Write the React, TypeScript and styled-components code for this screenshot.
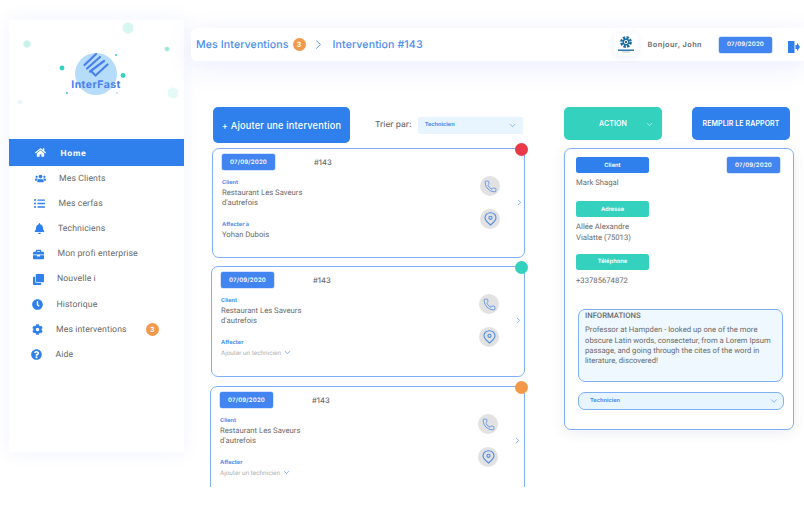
import React from 'react';
import styled, { createGlobalStyle } from 'styled-components';
import {
  FaHome,
  FaUsers,
  FaListUl,
  FaBell,
  FaBriefcase,
  FaClone,
  FaClock,
  FaCog,
  FaQuestionCircle,
} from 'react-icons/fa';
import { ChevronDown, ChevronRight, Phone } from 'lucide-react';

const blue = '#2f80ed';
const lightBlue = '#7fb0f5';
const teal = '#34d1bf';
const orange = '#f2994a';
const grey = '#6a6a6a';
const bodyFont = '"Roboto", "Liberation Sans", sans-serif';

const GlobalStyle = createGlobalStyle`
  html, body {
    margin: 0;
    padding: 0;
    background: #fff;
    font-family: "Inter", "Liberation Sans", sans-serif;
    text-rendering: geometricPrecision;
  }
`;

const Page = styled.div`
  width: 804px;
  height: 505px;
  overflow: hidden;
  display: flex;
  align-items: flex-start;
  padding-left: 9px;
  box-sizing: border-box;
  background: #fff;
`;

const Sidebar = styled.aside`
  flex: none;
  width: 175px;
  height: 432px;
  margin-top: 20px;
  background: #fff;
  box-shadow: 0 0 18px rgba(90, 110, 240, 0.08);
`;

const LogoArea = styled.div`
  position: relative;
  height: 119px;
`;

const LogoText = styled.span`
  position: absolute;
  left: 0;
  width: 174px;
  top: 58px;
  text-align: center;
  font-size: 10.5px;
  line-height: 14px;
  font-weight: 700;
  letter-spacing: 0.4px;
  color: #4a80ee;
`;

const Nav = styled.nav`
  display: flex;
  flex-direction: column;
`;

const NavItem = styled.div<{ $indent: number; $active?: boolean }>`
  display: flex;
  align-items: center;
  height: ${(p) => (p.$active ? 27 : 25.2)}px;
  padding-left: ${(p) => p.$indent}px;
  background: ${(p) => (p.$active ? blue : 'transparent')};
  color: ${(p) => (p.$active ? '#fff' : grey)};
  font-family: ${(p) => (p.$active ? 'inherit' : bodyFont)};
  font-size: ${(p) => (p.$active ? 8.1 : 8.7)}px;
  font-weight: ${(p) => (p.$active ? 700 : 400)};
  letter-spacing: ${(p) => (p.$active ? '0.7px' : '0.1px')};
`;

const NavIcon = styled.span<{ $active?: boolean }>`
  flex: none;
  width: 12px;
  margin-right: ${(p) => (p.$active ? 14 : 13)}px;
  display: flex;
  justify-content: center;
  font-size: 11px;
  color: ${(p) => (p.$active ? '#fff' : blue)};
`;

const Badge = styled.span<{ $left?: number }>`
  flex: none;
  width: 13px;
  height: 13px;
  margin-left: ${(p) => p.$left ?? 0}px;
  border-radius: 50%;
  background: ${orange};
  color: #fff;
  font-family: "Inter", sans-serif;
  font-size: 7px;
  font-weight: 700;
  letter-spacing: 0;
  display: flex;
  align-items: center;
  justify-content: center;
`;

const Main = styled.main`
  flex: none;
  width: 613px;
  margin-left: 7px;
  margin-top: 28px;
`;

const Header = styled.header`
  display: flex;
  align-items: center;
  height: 33px;
  padding-left: 5px;
  background: #fff;
  border-radius: 6px 0 0 6px;
  box-shadow: 0 6px 26px rgba(90, 110, 240, 0.13);
`;

const Crumb = styled.span`
  font-size: 10.6px;
  font-weight: 500;
  letter-spacing: 0.1px;
  color: #4a8df0;
`;

const CrumbArrow = styled(ChevronRight)`
  margin: 0 7px 0 5px;
  color: #4a8df0;
`;

const HeaderRight = styled.div`
  display: flex;
  align-items: center;
  margin-left: auto;
`;

const CompanyTile = styled.div`
  width: 24px;
  height: 23px;
  border-radius: 5px;
  background: #fff;
  box-shadow: 0 1px 6px rgba(90, 110, 240, 0.12);
  display: flex;
  align-items: center;
  justify-content: center;
`;

const Greeting = styled.span`
  margin: 0 17px 0 10px;
  font-size: 7.4px;
  font-weight: 600;
  letter-spacing: 0.4px;
  color: ${grey};
`;

const DateChip = styled.div`
  flex: none;
  width: 53px;
  height: 16px;
  border-radius: 2px;
  background: #4285f0;
  box-shadow: 0 0 0 0.5px #a9c9fa;
  color: #fff;
  font-size: 6px;
  font-weight: 600;
  letter-spacing: 0.2px;
  display: flex;
  align-items: center;
  justify-content: center;
`;

const Logout = styled.svg`
  margin: 5px 4px 0 16px;
`;

const Content = styled.div`
  display: flex;
  align-items: flex-start;
  margin-top: 46px;
  padding-left: 19px;
`;

const LeftColumn = styled.section`
  flex: none;
  width: 319px;
  height: 380px;
  overflow: hidden;
`;

const Toolbar = styled.div`
  display: flex;
  align-items: center;
  padding-left: 3px;
  margin-bottom: 5px;
`;

const AddButton = styled.button`
  flex: none;
  width: 137px;
  height: 36px;
  padding: 0;
  border: none;
  border-radius: 5px;
  background: ${blue};
  color: #fff;
  font-family: inherit;
  font-size: 9.2px;
  font-weight: 500;
  letter-spacing: 0.2px;
`;

const SortLabel = styled.span`
  margin: 0 6px 0 25px;
  font-size: 8.4px;
  font-weight: 500;
  color: ${grey};
`;

const SortSelect = styled.div`
  flex: none;
  width: 105px;
  height: 17px;
  box-sizing: border-box;
  padding: 0 6px 0 7px;
  border-radius: 2px;
  background: #e8f4fe;
  color: #4a8df0;
  font-size: 5.6px;
  font-weight: 700;
  display: flex;
  align-items: center;
  justify-content: space-between;
`;

const Card = styled.article<{ $shift: number; $top: number; $height: number }>`
  position: relative;
  box-sizing: border-box;
  width: ${(p) => 315 - p.$shift}px;
  height: ${(p) => p.$height}px;
  margin-left: ${(p) => p.$shift}px;
  margin-top: ${(p) => p.$top}px;
  padding: 5px 0 0 9px;
  display: flex;
  border: 1px solid ${lightBlue};
  border-radius: 7px;
  background: #fff;
`;

const StatusDot = styled.span<{ $color: string }>`
  position: absolute;
  top: -6px;
  right: -4px;
  width: 13px;
  height: 13px;
  border-radius: 50%;
  background: ${(p) => p.$color};
`;

const CardBody = styled.div`
  flex: none;
  width: 258px;
`;

const CardTop = styled.div`
  display: flex;
  align-items: center;
  margin-bottom: 9px;
`;

const CardNumber = styled.span`
  margin-left: 39px;
  font-size: 7.6px;
  font-weight: 500;
  color: ${grey};
`;

const FieldLabel = styled.div<{ $gap?: number }>`
  margin-top: ${(p) => p.$gap ?? 0}px;
  font-size: 5.6px;
  line-height: 8px;
  font-weight: 700;
  color: #4a8df0;
`;

const CardText = styled.div<{ $muted?: boolean }>`
  display: flex;
  align-items: center;
  gap: 2px;
  margin-top: 1px;
  font-family: ${bodyFont};
  font-size: ${(p) => (p.$muted ? 6.4 : 7.7)}px;
  line-height: 10.3px;
  font-weight: 400;
  color: ${(p) => (p.$muted ? '#b0b0b0' : grey)};
`;

const RoundActions = styled.div`
  display: flex;
  flex-direction: column;
  gap: 13px;
  margin-top: 22px;
`;

const RoundAction = styled.span`
  width: 20px;
  height: 20px;
  border-radius: 50%;
  background: #e2e2e2;
  color: #4f8be8;
  display: flex;
  align-items: center;
  justify-content: center;
`;

const CardArrow = styled(ChevronRight)`
  margin: 44px 0 0 15px;
  color: #5f9af2;
`;

const RightColumn = styled.section`
  flex: none;
  width: 230px;
  margin-left: 35px;
`;

const ActionRow = styled.div`
  display: flex;
  justify-content: space-between;
  width: 226px;
  margin-bottom: 8px;
`;

const ActionButton = styled.button<{ $color: string }>`
  position: relative;
  width: 98px;
  height: 33px;
  padding: 0;
  border: none;
  border-radius: 5px;
  background: ${(p) => p.$color};
  color: #fff;
  font-family: inherit;
  font-size: 7px;
  font-weight: 600;
  letter-spacing: 0.1px;
  display: flex;
  align-items: center;
  justify-content: center;
`;

const ActionChevron = styled(ChevronDown)`
  position: absolute;
  right: 8px;
  top: 13px;
`;

const DetailPanel = styled.div`
  box-sizing: border-box;
  width: 230px;
  height: 282px;
  padding: 8px 11px 0 11px;
  border: 1px solid ${lightBlue};
  border-radius: 7px;
  background: #fff;
  box-shadow: 0 3px 14px rgba(60, 70, 110, 0.09);
`;

const PanelTop = styled.div`
  display: flex;
  justify-content: space-between;
  padding-right: 2px;
`;

const Tag = styled.div<{ $color: string }>`
  width: 73px;
  height: 16px;
  border-radius: 2.5px;
  background: ${(p) => p.$color};
  color: #fff;
  font-size: 5.8px;
  font-weight: 600;
  display: flex;
  align-items: center;
  justify-content: center;
`;

const PanelText = styled.div<{ $top: number; $bottom: number }>`
  margin-top: ${(p) => p.$top}px;
  margin-bottom: ${(p) => p.$bottom}px;
  font-family: ${bodyFont};
  font-size: 7.7px;
  line-height: 10.3px;
  font-weight: 400;
  color: ${grey};
`;

const InfoBox = styled.div`
  box-sizing: border-box;
  width: 205px;
  height: 73px;
  margin-top: 23px;
  margin-left: 2px;
  padding: 0 6px;
  border: 1px solid ${lightBlue};
  border-radius: 7px;
  background: #eff8fe;
  font-family: ${bodyFont};
  font-size: 7.7px;
  line-height: 10.3px;
  font-weight: 400;
  color: ${grey};
`;

const InfoTitle = styled.div`
  margin-top: 1px;
  margin-bottom: 4px;
  font-weight: 500;
`;

const TechSelect = styled.div`
  box-sizing: border-box;
  width: 206px;
  height: 18px;
  margin-top: 10px;
  margin-left: 2px;
  padding: 0 4px 0 11px;
  border: 1px solid ${lightBlue};
  border-radius: 7px;
  background: #e8f4fe;
  color: #4a8df0;
  font-size: 5.6px;
  font-weight: 700;
  display: flex;
  align-items: center;
  justify-content: space-between;
`;

const hexagon = (cx: number, cy: number, r: number) =>
  [0, 1, 2, 3, 4, 5]
    .map((i) => {
      const a = (Math.PI / 3) * i + Math.PI / 6;
      return `${cx + r * Math.cos(a)},${cy + r * Math.sin(a)}`;
    })
    .join(' ');

const LogoArt = () => (
  <svg width="175" height="119" viewBox="9 20 175 119">
    <polygon points={hexagon(128, 28, 6)} fill="#d8f6f0" />
    <polygon points={hexagon(27, 44, 4)} fill="#c9f3ea" />
    <polygon points={hexagon(167, 49, 2.6)} fill="#9fe8d9" />
    <polygon points={hexagon(173, 93, 6)} fill="#e4faf6" />
    <polygon points={hexagon(20, 102, 2.6)} fill="#e8f6fb" />
    <circle cx="96" cy="74" r="21" fill="#b5dcfb" />
    <g fill="none" stroke="#4a80ee" strokeWidth="2.2" strokeLinecap="round" strokeLinejoin="round">
      <path d="M84.5 65 L96 54" />
      <path d="M87 68.5 L100 57" />
      <path d="M90 71.5 L104 61" />
      <path d="M91.5 71.5 L95.5 75.5 L107.5 64.5" />
    </g>
    <circle cx="62" cy="68" r="2.4" fill={teal} />
    <circle cx="123" cy="75.5" r="2.4" fill={teal} />
    <circle cx="116" cy="55" r="1" fill={teal} />
    <circle cx="67" cy="93" r="1" fill={teal} />
    <circle cx="117" cy="93" r="1" fill="#b5dcfb" />
  </svg>
);

const CompanyLogo = () => (
  <svg width="20" height="21" viewBox="0 0 20 21">
    <circle cx="10" cy="8" r="4.6" fill="none" stroke="#1a6fa3" strokeWidth="2.6" strokeDasharray="2.4 1.2" />
    <circle cx="10" cy="8" r="3.4" fill="#1a6fa3" />
    <circle cx="10" cy="8" r="2" fill="#fff" />
    <circle cx="10" cy="8" r="1" fill="#22303a" />
    <rect x="2" y="15.5" width="16" height="1.4" fill="#1a6fa3" />
    <rect x="6" y="17.6" width="8" height="0.7" fill="#9aa7b0" />
  </svg>
);

const PinIcon = () => (
  <svg width="13" height="14" viewBox="0 0 13 14" fill="none" stroke="currentColor" strokeWidth="1.1">
    <path d="M6.5 13 C4 11 1 8.6 1 5.7 A5.5 5 0 0 1 12 5.7 C12 8.6 9 11 6.5 13 Z" />
    <circle cx="6.5" cy="5.8" r="1.6" />
  </svg>
);

const navItems = [
  { label: 'Home', Icon: FaHome, indent: 25.5, active: true },
  { label: 'Mes Clients', Icon: FaUsers, indent: 25 },
  { label: 'Mes cerfas', Icon: FaListUl, indent: 24.5 },
  { label: 'Techniciens', Icon: FaBell, indent: 24 },
  { label: 'Mon profi enterprise', Icon: FaBriefcase, indent: 23.5 },
  { label: 'Nouvelle i', Icon: FaClone, indent: 23 },
  { label: 'Historique', Icon: FaClock, indent: 22.5 },
  { label: 'Mes interventions', Icon: FaCog, indent: 22, badge: 3 },
  { label: 'Aide', Icon: FaQuestionCircle, indent: 21.5 },
];

const cards = [
  { color: '#e8394a', shift: 2, top: 0, height: 110, assigned: 'Yohan Dubois' },
  { color: teal, shift: 1, top: 8, height: 111 },
  { color: orange, shift: 0, top: 9, height: 130 },
];

const App: React.FC = () => (
  <Page>
    <GlobalStyle />
    <Sidebar>
      <LogoArea>
        <LogoArt />
        <LogoText>InterFast</LogoText>
      </LogoArea>
      <Nav>
        {navItems.map(({ label, Icon, indent, active, badge }) => (
          <NavItem key={label} $indent={indent} $active={active}>
            <NavIcon $active={active}>
              <Icon />
            </NavIcon>
            {label}
            {badge && <Badge $left={19}>{badge}</Badge>}
          </NavItem>
        ))}
      </Nav>
    </Sidebar>

    <Main>
      <Header>
        <Crumb>Mes Interventions</Crumb>
        <Badge $left={4}>3</Badge>
        <CrumbArrow size={15} strokeWidth={1.5} />
        <Crumb>Intervention #143</Crumb>
        <HeaderRight>
          <CompanyTile>
            <CompanyLogo />
          </CompanyTile>
          <Greeting>Bonjour, John</Greeting>
          <DateChip>07/09/2020</DateChip>
          <Logout width="12" height="14" viewBox="0 0 12 14">
            <path d="M0 1 H6.5 V13 H0 Z" fill={blue} />
            <path d="M7.5 5 H9 V2.8 L12 7 L9 11.2 V9 H7.5 Z" fill={blue} />
          </Logout>
        </HeaderRight>
      </Header>

      <Content>
        <LeftColumn>
          <Toolbar>
            <AddButton>+ Ajouter une intervention</AddButton>
            <SortLabel>Trier par:</SortLabel>
            <SortSelect>
              Technicien
              <ChevronDown size={9} strokeWidth={1.5} />
            </SortSelect>
          </Toolbar>

          {cards.map((card, i) => (
            <Card key={i} $shift={card.shift} $top={card.top} $height={card.height}>
              <CardBody>
                <CardTop>
                  <DateChip>07/09/2020</DateChip>
                  <CardNumber>#143</CardNumber>
                </CardTop>
                <FieldLabel>Client</FieldLabel>
                <CardText>
                  Restaurant Les Saveurs
                  <br />
                  d'autrefois
                </CardText>
                {card.assigned ? (
                  <>
                    <FieldLabel $gap={12}>Affecter à</FieldLabel>
                    <CardText>{card.assigned}</CardText>
                  </>
                ) : (
                  <>
                    <FieldLabel $gap={12}>Affecter</FieldLabel>
                    <CardText $muted>
                      Ajouter un technicien
                      <ChevronDown size={9} strokeWidth={2} color="#5f9af2" />
                    </CardText>
                  </>
                )}
              </CardBody>
              <RoundActions>
                <RoundAction>
                  <Phone size={13} strokeWidth={1.5} />
                </RoundAction>
                <RoundAction>
                  <PinIcon />
                </RoundAction>
              </RoundActions>
              <CardArrow size={9} strokeWidth={2} />
              <StatusDot $color={card.color} />
            </Card>
          ))}
        </LeftColumn>

        <RightColumn>
          <ActionRow>
            <ActionButton $color={teal}>
              ACTION
              <ActionChevron size={9} strokeWidth={1.5} />
            </ActionButton>
            <ActionButton $color={blue}>REMPLIR LE RAPPORT</ActionButton>
          </ActionRow>
          <DetailPanel>
            <PanelTop>
              <Tag $color={blue}>Client</Tag>
              <DateChip>07/09/2020</DateChip>
            </PanelTop>
            <PanelText $top={5} $bottom={13}>
              Mark Shagal
            </PanelText>
            <Tag $color={teal}>Adresse</Tag>
            <PanelText $top={5} $bottom={11}>
              Allée Alexandre
              <br />
              Vialatte (75013)
            </PanelText>
            <Tag $color={teal}>Téléphone</Tag>
            <PanelText $top={6} $bottom={0}>
              +33785674872
            </PanelText>
            <InfoBox>
              <InfoTitle>INFORMATIONS</InfoTitle>
              Professor at Hampden - looked up one of the more obscure Latin words, consectetur, from a Lorem Ipsum
              passage, and going through the cites of the word in literature, discovered!
            </InfoBox>
            <TechSelect>
              Technicien
              <ChevronDown size={10} strokeWidth={1.5} />
            </TechSelect>
          </DetailPanel>
        </RightColumn>
      </Content>
    </Main>
  </Page>
);

export default App;
